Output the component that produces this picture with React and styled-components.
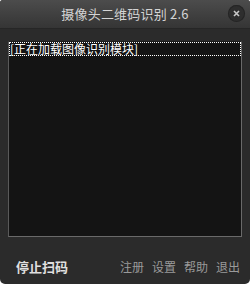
import React from "react";
import styled, { createGlobalStyle } from "styled-components";

const GlobalStyle = createGlobalStyle`
  html, body {
    margin: 0;
    padding: 0;
    background: #ffffff;
  }
  body {
    font-family: "Noto Sans CJK SC", "Liberation Sans", sans-serif;
  }
`;

const Window = styled.div`
  width: 250px;
  height: 284px;
  display: flex;
  flex-direction: column;
  background: #2b2b2b;
  border-radius: 3px 3px 5px 5px;
  overflow: hidden;
`;

const TitleBar = styled.div`
  height: 28px;
  flex: none;
  display: flex;
  align-items: center;
  justify-content: center;
  position: relative;
  background: linear-gradient(to bottom, #4c4c4c 0%, #3e3e3e 60%, #353535 100%);
  border-bottom: 1px solid #262626;
`;

const Title = styled.div`
  color: #d4d4d4;
  font-size: 13px;
  line-height: 28px;
  letter-spacing: 0.2px;
`;

const CloseButton = styled.div`
  position: absolute;
  right: 5px;
  top: 5px;
  width: 17px;
  height: 17px;
  border-radius: 50%;
  background: #2e2e2e;
  box-shadow: inset 0 0 0 1px #252525;
  display: flex;
  align-items: center;
  justify-content: center;
`;

const Body = styled.div`
  flex: 1;
  display: flex;
  flex-direction: column;
  padding: 12px 8px 0 8px;
`;

const ListBox = styled.div`
  height: 196px;
  background: #141414;
  border: 1px solid #6a6a6a;
  border-top-color: #1e1e1e;
  border-left-color: #5a5a5a;
  box-sizing: border-box;
`;

const ListItem = styled.div`
  height: 14px;
  line-height: 14px;
  padding-left: 1px;
  font-size: 12px;
  color: ${(p) => (p.$selected ? "#ffffff" : "#cccccc")};
  outline: ${(p) => (p.$selected ? "1px dotted #ffffff" : "none")};
  outline-offset: -1px;
  white-space: nowrap;
`;

const Footer = styled.div`
  flex: 1;
  display: flex;
  align-items: center;
  justify-content: space-between;
  padding: 12px 2px 0 8px;
`;

const MainAction = styled.div`
  color: #e0e0e0;
  font-size: 13px;
  font-weight: bold;
`;

const Links = styled.div`
  display: flex;
  gap: 8px;
`;

const Link = styled.div`
  color: #9a9a9a;
  font-size: 12px;
`;

export default function App() {
  return (
    <>
      <GlobalStyle />
      <Window>
        <TitleBar>
          <Title>摄像头二维码识别 2.6</Title>
          <CloseButton>
            <svg width="7" height="7" viewBox="0 0 7 7">
              <path d="M1 1 L6 6 M6 1 L1 6" stroke="#c8c8c8" strokeWidth="1.6" />
            </svg>
          </CloseButton>
        </TitleBar>
        <Body>
          <ListBox>
            <ListItem $selected>[正在加载图像识别模块]</ListItem>
          </ListBox>
          <Footer>
            <MainAction>停止扫码</MainAction>
            <Links>
              <Link>注册</Link>
              <Link>设置</Link>
              <Link>帮助</Link>
              <Link>退出</Link>
            </Links>
          </Footer>
        </Body>
      </Window>
    </>
  );
}
